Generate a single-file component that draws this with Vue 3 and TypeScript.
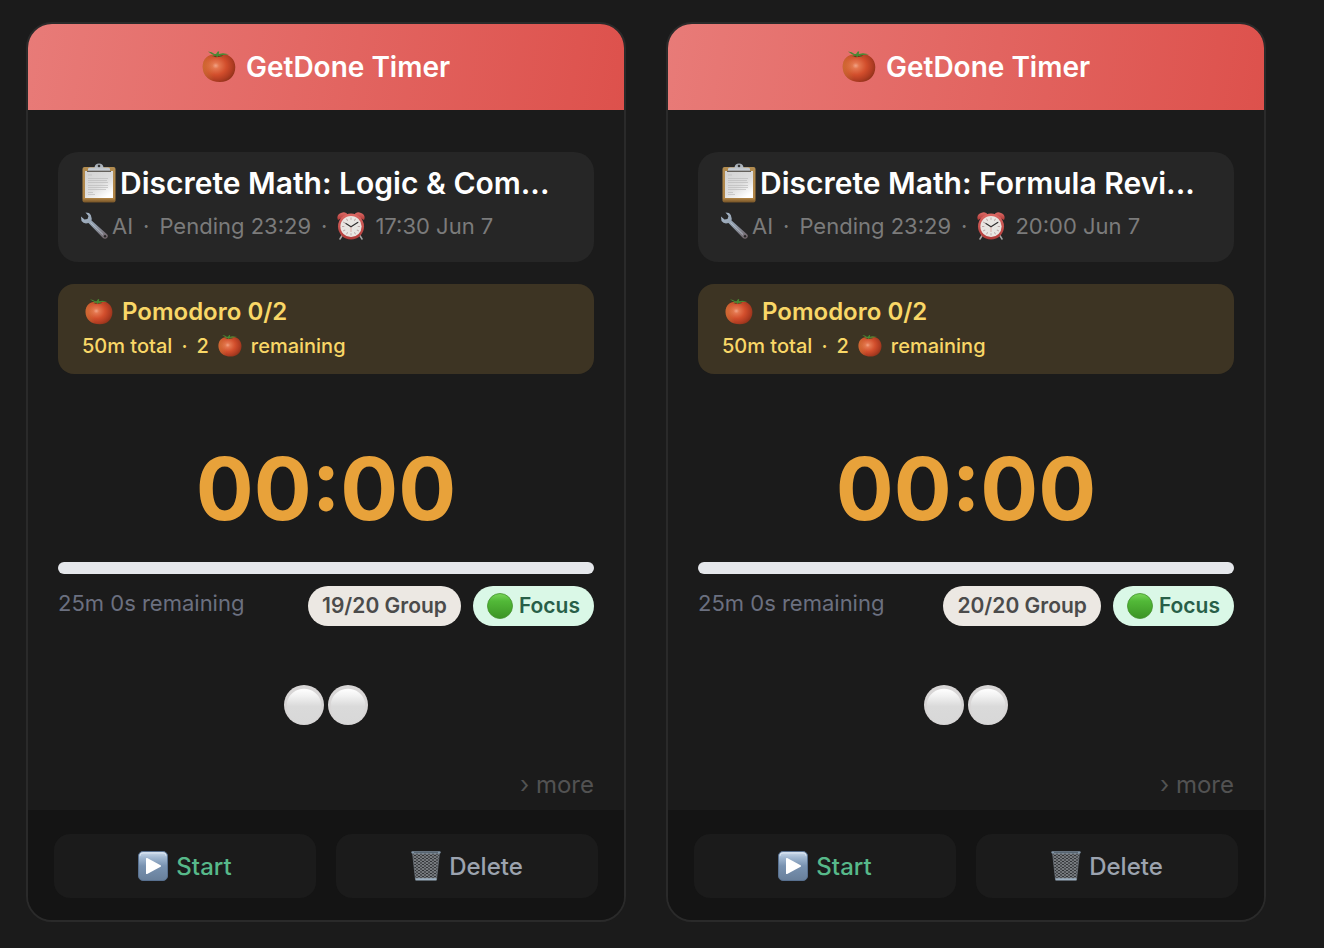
<script setup lang="ts">
interface Task {
  id: number
  title: string
  due: string
  group: string
}

const tasks: Task[] = [
  { id: 1, title: 'Discrete Math: Logic & Com...', due: '17:30 Jun 7', group: '19/20 Group' },
  { id: 2, title: 'Discrete Math: Formula Revi...', due: '20:00 Jun 7', group: '20/20 Group' },
]
const ticks = [0, 30, 60, 90, 120, 150, 180, 210, 240, 270, 300, 330]
</script>

<template>
  <svg class="sprite" width="0" height="0" aria-hidden="true">
    <defs>
      <radialGradient id="g-tomato" cx="0.4" cy="0.42" r="0.65">
        <stop offset="0" stop-color="#f2a285" />
        <stop offset="0.16" stop-color="#e4764f" />
        <stop offset="0.5" stop-color="#d24e2c" />
        <stop offset="0.8" stop-color="#b03c22" />
        <stop offset="1" stop-color="#8e3219" />
      </radialGradient>
      <linearGradient id="g-tomato-side" x1="0" x2="1" y1="0" y2="0">
        <stop offset="0" stop-color="#d08a3c" stop-opacity="0.5" />
        <stop offset="0.35" stop-color="#d08a3c" stop-opacity="0" />
      </linearGradient>
      <linearGradient id="g-board" x1="0" x2="0" y1="0" y2="1">
        <stop offset="0" stop-color="#b28c50" />
        <stop offset="0.88" stop-color="#b08446" />
        <stop offset="1" stop-color="#745226" />
      </linearGradient>
      <linearGradient id="g-paper" x1="0" x2="0.7" y1="0" y2="1">
        <stop offset="0" stop-color="#d2d2d2" />
        <stop offset="0.6" stop-color="#dedede" />
        <stop offset="1" stop-color="#ffffff" />
      </linearGradient>
      <linearGradient id="g-clip" x1="0" x2="0" y1="0" y2="1">
        <stop offset="0" stop-color="#9aa3ad" />
        <stop offset="0.7" stop-color="#c6ccd2" />
        <stop offset="1" stop-color="#75716c" />
      </linearGradient>
      <linearGradient id="g-steel" x1="0" x2="1" y1="0" y2="1">
        <stop offset="0" stop-color="#a8b8ca" />
        <stop offset="0.5" stop-color="#8f9cab" />
        <stop offset="1" stop-color="#706064" />
      </linearGradient>
      <linearGradient id="g-red" x1="0" x2="0" y1="0" y2="1">
        <stop offset="0" stop-color="#dc6965" />
        <stop offset="1" stop-color="#b03a38" />
      </linearGradient>
      <linearGradient id="g-green" x1="0" x2="0" y1="0" y2="1">
        <stop offset="0" stop-color="#7ad65a" />
        <stop offset="0.3" stop-color="#52b938" />
        <stop offset="1" stop-color="#3c9425" />
      </linearGradient>
      <linearGradient id="g-white" x1="0" x2="0" y1="0" y2="1">
        <stop offset="0" stop-color="#ffffff" />
        <stop offset="0.2" stop-color="#f2f2f2" />
        <stop offset="0.5" stop-color="#dadada" />
        <stop offset="1" stop-color="#d8d8d8" />
      </linearGradient>
      <linearGradient id="g-play" x1="0" x2="0" y1="0" y2="1">
        <stop offset="0" stop-color="#d0deee" />
        <stop offset="0.22" stop-color="#9fb6d0" />
        <stop offset="0.5" stop-color="#7892b0" />
        <stop offset="1" stop-color="#687f9a" />
      </linearGradient>
      <pattern id="p-mesh" width="4" height="3" patternUnits="userSpaceOnUse">
        <path d="M0 0L4 3M4 0L0 3" stroke="#93979b" stroke-width="0.8" />
      </pattern>
    </defs>
    <symbol id="tomato" viewBox="0 0 34 34">
      <path d="M17 4.500C25 2 33.300 8 33.300 17C33.300 26 27 32 18 32C8 32 0.700 26 0.700 17C0.700 8 7 3.500 17 4.500Z" fill="url(#g-tomato)" />
      <path d="M17 4.500C25 2 33.300 8 33.300 17C33.300 26 27 32 18 32C8 32 0.700 26 0.700 17C0.700 8 7 3.500 17 4.500Z" fill="url(#g-tomato-side)" />
      <path d="M11 6Q16 4.500 21.500 5.500Q18 7.500 15 7Q12.500 7.500 11 6Z" fill="#74301c" />
      <path d="M6 1.500Q10 1.800 12.500 4L14 4L16 1.300L17.300 1.700L16.700 4L21 3.200L27 4.200L21.500 4.900L18 5.200L21 7.600L16.500 5.800L15 7.500L14 5.600L9.500 6.800L12 4.900Q9 4.200 6 1.500Z" fill="#468a34" />
    </symbol>
    <symbol id="clipboard" viewBox="0 0 34 40">
      <rect x="0.500" y="4" width="33" height="35.500" rx="2" fill="url(#g-board)" />
      <rect x="3" y="8" width="28" height="27" fill="url(#g-paper)" />
      <path d="M6 12H10M6 15.500H26M6 17.500H25M6 19.500H26M6 22.500H26M6 24.500H26M6 26.500H24M6 29.500H11M6 31.500H13" stroke="#bcbcbc" stroke-width="0.700" />
      <path d="M6 9V6Q6 4.500 8 4.500H12.500Q13 0.500 17 0.500Q21 0.500 21.500 4.500H26Q28 4.500 28 6V9Z" fill="url(#g-clip)" />
      <circle cx="17" cy="3" r="1.300" fill="#353535" />
      <path d="M5 8.500H29" stroke="#625f5a" stroke-width="1.200" />
    </symbol>
    <symbol id="wrench" viewBox="0 0 28 28">
      <path d="M1 4.500L1.500 9Q4 12.500 8.500 11L22.500 25.500Q25 28 27.200 25.800Q29 23.500 26.200 21.500L11.500 8.500Q12.500 3.500 9 1L5.500 0.500L8.500 4L7.500 7L4.500 7.500Z" fill="url(#g-steel)" />
      <path d="M10.500 10.500L23 22.500" stroke="#bcc6d0" stroke-width="0.800" />
      <circle cx="25" cy="24.300" r="1.200" fill="#282828" />
    </symbol>
    <symbol id="alarm" viewBox="0 0 28 28">
      <path d="M6 22L3 27M22 22L25 27" stroke="#a6a6a6" stroke-width="1.500" stroke-linecap="round" />
      <path d="M1 8Q-1 3 4 1Q9-1 11 3Z" fill="url(#g-red)" />
      <path d="M27 8Q29 3 24 1Q19-1 17 3Z" fill="url(#g-red)" />
      <circle cx="14" cy="14.500" r="13" fill="url(#g-red)" />
      <circle cx="14" cy="14.500" r="10.600" fill="#e8e6e2" />
      <path v-for="angle in ticks" :key="angle" d="M14 5.500V7.800" stroke="#b9a5a5" stroke-width="0.900" :transform="`rotate(${angle} 14 14.500)`" />
      <path d="M8.500 11.200L14 14.800L21 10.300" fill="none" stroke="#303030" stroke-width="1.100" />
      <path d="M14 14.800V20" stroke="#cf7871" stroke-width="0.500" />
    </symbol>
    <symbol id="green" viewBox="0 0 26 26">
      <circle cx="13" cy="13" r="12.500" fill="url(#g-green)" stroke="#42902c" stroke-width="0.800" />
    </symbol>
    <symbol id="white" viewBox="0 0 40 40">
      <circle cx="20" cy="20" r="20" fill="#d8d6d6" />
      <path d="M3 17A17.500 17.500 0 0 1 37 17Q38 38 20 39Q2 38 3 17Z" fill="url(#g-white)" />
    </symbol>
    <symbol id="play" viewBox="0 0 30 30">
      <rect x="0.500" y="0.500" width="29" height="29" rx="4.500" fill="url(#g-play)" stroke="#58708f" />
      <path d="M2 5Q2 2 5 2H25Q28 2 28 5" fill="none" stroke="#e0e9f2" stroke-width="0.800" />
      <path d="M8 7.800Q8 6.500 9.200 7.100L22.600 14.300Q23.600 15 22.600 15.700L9.200 22.900Q8 23.500 8 22.200Z" fill="#fff" />
    </symbol>
    <symbol id="trash" viewBox="0 0 30 30">
      <path d="M1.500 1.500H28.500L25.500 28.500H4.500Z" fill="#303336" />
      <path d="M1.500 1.500H28.500L25.500 28.500H4.500Z" fill="url(#p-mesh)" stroke="#6f777f" stroke-width="0.700" />
      <rect x="0.300" y="0.300" width="29.400" height="2.200" rx="1" fill="#8295a7" />
      <path d="M3 1.400H27" stroke="#343c44" stroke-width="0.600" />
      <path d="M4.500 27.200H25.500V29.500H4.500Z" fill="#9baebf" />
    </symbol>
  </svg>

  <main class="board">
    <article v-for="task in tasks" :key="task.id" class="card">
      <header class="head">
        <svg class="icon-head" aria-hidden="true"><use href="#tomato" /></svg>
        <h2>GetDone Timer</h2>
      </header>

      <div class="body">
        <section class="task">
          <h3>
            <svg class="icon-clipboard" aria-hidden="true"><use href="#clipboard" /></svg>
            <span>{{ task.title }}</span>
          </h3>
          <div class="meta">
            <svg class="icon-meta" aria-hidden="true"><use href="#wrench" /></svg>
            <p>
              <span>AI</span>
              <span>·</span>
              <span>Pending 23:29</span>
              <span>·</span>
              <svg class="icon-meta" aria-hidden="true"><use href="#alarm" /></svg>
              <time>{{ task.due }}</time>
            </p>
          </div>
        </section>

        <section class="pomodoro">
          <h4>
            <svg class="icon-meta" aria-hidden="true"><use href="#tomato" /></svg>
            <span>Pomodoro 0/2</span>
          </h4>
          <p>
            <span>50m total</span>
            <span>·</span>
            <span>2</span>
            <svg class="icon-small" aria-hidden="true"><use href="#tomato" /></svg>
            <span>remaining</span>
          </p>
        </section>

        <div class="clock" role="timer">00:00</div>
        <div class="bar" role="progressbar" aria-label="Session progress" aria-valuenow="0" aria-valuemin="0" aria-valuemax="100"></div>

        <div class="status">
          <span class="left">25m 0s remaining</span>
          <span class="badge group">{{ task.group }}</span>
          <span class="badge focus">
            <svg class="icon-focus" aria-hidden="true"><use href="#green" /></svg>
            <span>Focus</span>
          </span>
        </div>

        <div class="rounds">
          <svg v-for="n in 2" :key="n" class="icon-round" aria-hidden="true"><use href="#white" /></svg>
        </div>

        <button type="button" class="more">› more</button>
      </div>

      <footer class="foot">
        <button type="button" class="action start">
          <svg class="icon-action" aria-hidden="true"><use href="#play" /></svg>
          <span>Start</span>
        </button>
        <button type="button" class="action delete">
          <svg class="icon-action" aria-hidden="true"><use href="#trash" /></svg>
          <span>Delete</span>
        </button>
      </footer>
    </article>
  </main>
</template>

<style>
body {
  background: #1b1b1b;
}
</style>

<style scoped>
.sprite {
  position: absolute;
}

.board {
  display: grid;
  grid-template-columns: 1fr 1fr;
  gap: 40px;
  padding: 22px 58px 26px 26px;
  font-family: Inter, "Liberation Sans", sans-serif;
  color: #fff;
}

.board svg {
  display: block;
  flex: none;
}

h2,
h3,
h4,
p {
  margin: 0;
}

button {
  border: 0;
  font-family: inherit;
  cursor: pointer;
}

.card {
  min-width: 0;
  border: 2px solid #2a2a2a;
  border-radius: 26px;
  overflow: hidden;
  background: #1b1b1b;
}

.head {
  display: flex;
  align-items: center;
  justify-content: center;
  gap: 10px;
  padding: 25px 0;
  background: linear-gradient(100deg, #e87b78, #dd514c);
}

.head h2 {
  font-size: 28px;
  line-height: 36px;
  font-weight: 600;
}

.icon-head {
  width: 34px;
  height: 34px;
}

.body {
  display: flex;
  flex-direction: column;
  padding: 42px 30px 8px;
}

.task {
  padding: 10px 22px 14px;
  border-radius: 20px;
  background: #262626;
}

.task h3 {
  display: flex;
  align-items: center;
  gap: 4px;
  padding-left: 2px;
  font-size: 30px;
  line-height: 42px;
  font-weight: 600;
  white-space: nowrap;
}

.icon-clipboard {
  width: 34px;
  height: 40px;
}

.meta {
  display: flex;
  align-items: center;
  gap: 4px;
  font-size: 22px;
  line-height: 44px;
  color: #7b7b7b;
  white-space: nowrap;
}

.meta p {
  display: flex;
  align-items: center;
  gap: 10px;
}

.icon-meta {
  width: 28px;
  height: 28px;
}

.pomodoro {
  margin-top: 22px;
  padding: 11px 24px;
  border-radius: 16px;
  background: #3d3423;
  color: #f9d767;
  white-space: nowrap;
}

.pomodoro h4 {
  display: flex;
  align-items: center;
  gap: 9px;
  padding-left: 3px;
  font-size: 24px;
  line-height: 34px;
  font-weight: 600;
}

.pomodoro p {
  display: flex;
  align-items: center;
  gap: 9px;
  font-size: 20px;
  line-height: 34px;
  font-weight: 500;
}

.icon-small {
  width: 24px;
  height: 24px;
}

.clock {
  margin-top: 64px;
  text-align: center;
  font-size: 86px;
  line-height: 102px;
  font-weight: 700;
  color: #e8a23a;
}

.bar {
  height: 12px;
  margin-top: 22px;
  border-radius: 6px;
  background: #e5e7eb;
}

.status {
  display: flex;
  align-items: center;
  gap: 12px;
  margin-top: 12px;
  white-space: nowrap;
}

.left {
  margin-right: auto;
  padding-bottom: 6px;
  font-size: 22px;
  line-height: 34px;
  color: #6b7080;
}

.badge {
  display: flex;
  align-items: center;
  gap: 6px;
  padding: 0 14px;
  border-radius: 20px;
  font-size: 21px;
  line-height: 40px;
  font-weight: 600;
}

.group {
  background: #ece8e3;
  color: #4b4b4b;
}

.focus {
  background: #daf8e7;
  color: #285f48;
}

.icon-focus {
  width: 26px;
  height: 26px;
}

.rounds {
  display: flex;
  justify-content: center;
  gap: 4px;
  margin-top: 59px;
}

.icon-round {
  width: 40px;
  height: 40px;
}

.more {
  align-self: flex-end;
  margin-top: 43px;
  padding: 0;
  background: none;
  color: #525252;
  font-size: 24px;
  line-height: 34px;
}

.foot {
  display: grid;
  grid-template-columns: 1fr 1fr;
  gap: 20px;
  padding: 24px 26px 22px;
  background: #141414;
}

.action {
  display: flex;
  align-items: center;
  justify-content: center;
  gap: 8px;
  height: 64px;
  border-radius: 16px;
  background: #1b1b1b;
  font-size: 24px;
  font-weight: 500;
}

.icon-action {
  width: 30px;
  height: 30px;
}

.start {
  color: #57b98a;
}

.delete {
  color: #9ca3af;
}
</style>
